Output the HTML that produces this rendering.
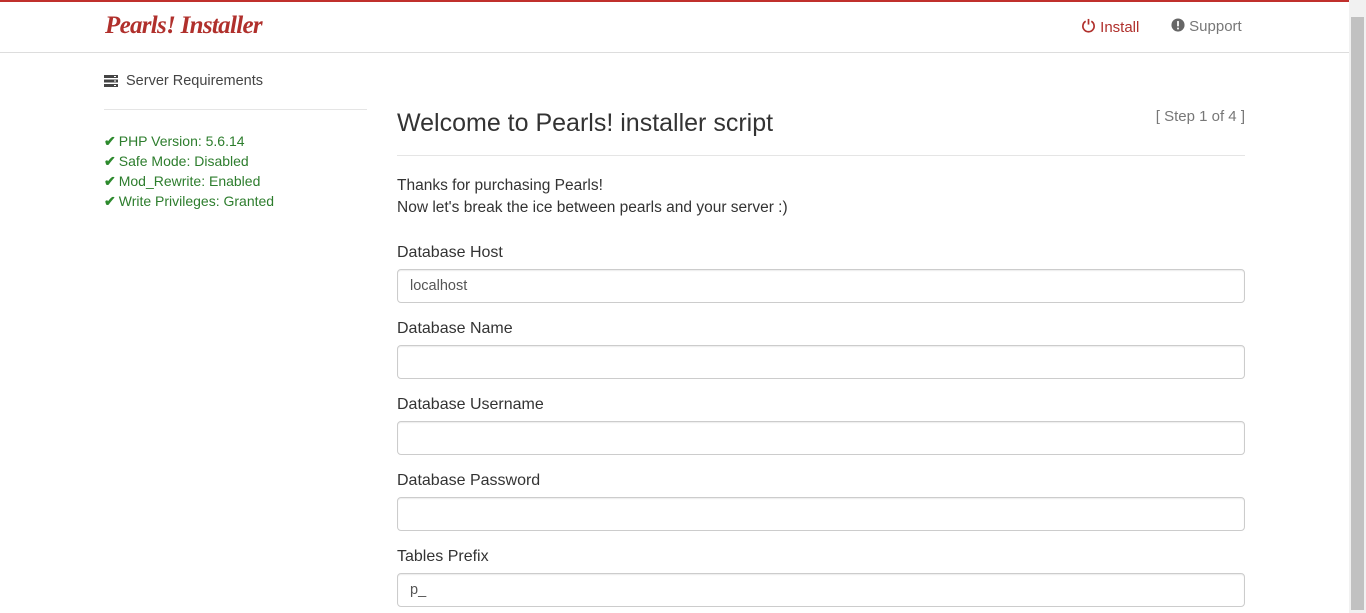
<!DOCTYPE html>
<html><head><meta charset="utf-8"><style>
*{box-sizing:border-box;margin:0;padding:0}
body{width:1366px;height:613px;overflow:hidden;background:#fff;font-family:"Liberation Sans",sans-serif;color:#333;position:relative}
.top{position:absolute;left:0;top:0;width:1349px;height:2px;background:#c0302c}
.hdr{position:absolute;left:0;top:2px;width:1349px;height:51px;border-bottom:1px solid #ddd}
.logo{position:absolute;left:105px;top:10px;font-family:"Liberation Serif",serif;font-style:italic;font-weight:bold;font-size:25px;color:#b0302c;letter-spacing:-0.7px}
.nav{position:absolute;top:16px;font-size:15px}
.sb{position:absolute;right:0;top:0;width:17px;height:613px;background:#f1f1f1}
.sb div{position:absolute;left:2px;top:17px;width:13px;height:593px;background:#c1c1c1}
.side{position:absolute;left:104px;top:73px;width:263px}
.side h4{font-weight:normal;font-size:14.5px;color:#444;padding-left:22px;height:37px;border-bottom:1px solid #e5e5e5;position:relative}
.ok{color:#2d7d2d;font-size:14px;line-height:20px}
.ok span{color:#2d8a2d;font-weight:bold;margin-right:3px}
.main{position:absolute;left:397px;top:106px;width:848px}
h1{font-weight:normal;font-size:25px;color:#333;height:50px;border-bottom:1px solid #e5e5e5;padding-top:3px}
.step{position:absolute;right:0;top:2px;color:#777;font-size:15px}
p{font-size:15.5px;line-height:22px;margin-top:19px}
label{display:block;font-size:16px;margin-top:15px;height:20px;line-height:20px;position:relative;top:1px}
label.f{margin-top:23px}
input{display:block;width:848px;height:34px;border:1px solid #ccc;border-radius:4px;margin-top:7px;padding-left:12px;font-size:14.5px;color:#555;font-family:inherit;box-shadow:inset 0 1px 1px rgba(0,0,0,.075)}
</style></head><body>
<div class="top"></div>
<div class="hdr">
<div class="logo">Pearls! Installer</div>
<div class="nav" style="left:1081px;color:#b0302c"><svg width="15" height="15" viewBox="0 0 16 16" style="vertical-align:-1px"><path d="M5 3.5A6 6 0 1 0 11 3.5" fill="none" stroke="#b0302c" stroke-width="1.8"/><path d="M8 1v6" stroke="#b0302c" stroke-width="1.8"/></svg> Install</div>
<div class="nav" style="left:1171px;color:#777"><svg width="14" height="14" viewBox="0 0 16 16" style="vertical-align:-1px"><circle cx="8" cy="8" r="7.5" fill="#666"/><rect x="7" y="3.5" width="2" height="6" fill="#fff"/><rect x="7" y="11" width="2" height="2" fill="#fff"/></svg> Support</div>
</div>
<div class="side">
<h4><svg width="14" height="12" viewBox="0 0 14 12" style="position:absolute;left:0;top:2px"><rect width="14" height="3" fill="#444"/><rect y="4.5" width="14" height="3" fill="#444"/><rect y="9" width="14" height="3" fill="#444"/><rect x="10" y="1" width="2" height="1" fill="#fff"/><rect x="10" y="5.5" width="2" height="1" fill="#fff"/><rect x="10" y="10" width="2" height="1" fill="#fff"/></svg>Server Requirements</h4>
<div style="height:21px"></div>
<div class="ok"><span>✔</span>PHP Version: 5.6.14</div>
<div class="ok"><span>✔</span>Safe Mode: Disabled</div>
<div class="ok"><span>✔</span>Mod_Rewrite: Enabled</div>
<div class="ok"><span>✔</span>Write Privileges: Granted</div>
</div>
<div class="main">
<h1>Welcome to Pearls! installer script</h1>
<div class="step">[ Step 1 of 4 ]</div>
<p>Thanks for purchasing Pearls!<br>Now let's break the ice between pearls and your server :)</p>
<label class="f">Database Host</label><input value="localhost">
<label>Database Name</label><input>
<label>Database Username</label><input>
<label>Database Password</label><input>
<label>Tables Prefix</label><input value="p_">
</div>
<div class="sb"><div></div></div>
</body></html>
